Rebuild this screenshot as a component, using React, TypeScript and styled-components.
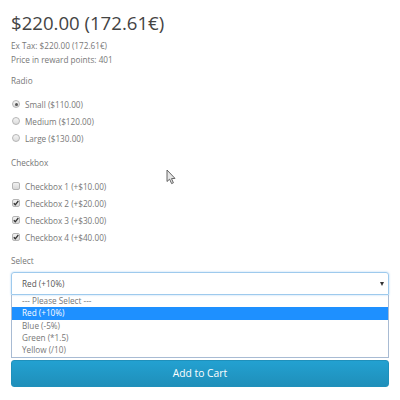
import React from 'react';
import styled, { createGlobalStyle } from 'styled-components';

const GlobalStyle = createGlobalStyle`
  html, body {
    margin: 0;
    padding: 0;
    background: #ffffff;
  }
  body {
    font-family: 'Open Sans', 'DejaVu Sans', sans-serif;
    color: #777777;
  }
`;

const Page = styled.div`
  position: relative;
  width: 400px;
  height: 400px;
  padding: 10px 11px 0;
  box-sizing: border-box;
  overflow: hidden;
`;

const Price = styled.h2`
  margin: 0;
  font-size: 18.6px;
  line-height: 26px;
  font-weight: 400;
  color: #444444;
`;

const InfoList = styled.ul`
  list-style: none;
  margin: 3px 0 0;
  padding: 0;
`;

const InfoItem = styled.li`
  font-size: 8.2px;
  line-height: 14px;
  color: #777777;
`;

const Group = styled.div<{ $gap?: number }>`
  margin-top: ${(p) => p.$gap ?? 9}px;
`;

const FieldLabel = styled.div`
  font-size: 8.2px;
  line-height: 14px;
  color: #777777;
`;

const OptionList = styled.div`
  margin-top: 7.5px;
  display: flex;
  flex-direction: column;
`;

const Option = styled.label`
  display: flex;
  align-items: center;
  gap: 5px;
  height: 17px;
  padding-left: 1px;
  font-size: 8.2px;
  color: #777777;
`;

const RadioMark = styled.span<{ $checked?: boolean }>`
  width: 8px;
  height: 8px;
  box-sizing: border-box;
  border-radius: 50%;
  border: 1px solid #b5b5b5;
  background: linear-gradient(#f4f4f4, #dcdcdc);
  display: flex;
  align-items: center;
  justify-content: center;

  &::after {
    content: '';
    display: ${(p) => (p.$checked ? 'block' : 'none')};
    width: 3px;
    height: 3px;
    border-radius: 50%;
    background: #555555;
  }
`;

const CheckMark = styled.span`
  width: 8px;
  height: 8px;
  box-sizing: border-box;
  border-radius: 2px;
  border: 1px solid #b5b5b5;
  background: linear-gradient(#f2f2f2, #d8d8d8);
  display: flex;
  align-items: center;
  justify-content: center;
`;

const SelectBox = styled.div`
  margin-top: 4px;
  height: 23px;
  box-sizing: border-box;
  border: 1px solid #9ecaed;
  border-radius: 3px 3px 0 0;
  box-shadow: 0 0 2px rgba(102, 175, 233, 0.6);
  display: flex;
  align-items: center;
  justify-content: space-between;
  padding: 0 4px 0 10px;
  font-size: 8.2px;
  color: #555555;
`;

const Arrow = styled.span`
  width: 0;
  height: 0;
  border-left: 2.5px solid transparent;
  border-right: 2.5px solid transparent;
  border-top: 4px solid #333333;
`;

const Dropdown = styled.ul`
  list-style: none;
  margin: 0;
  padding: 0;
  border: 1px solid #a8bbd3;
  border-top: none;
  height: 63px;
  box-sizing: border-box;
`;

const DropItem = styled.li<{ $active?: boolean }>`
  height: 12.3px;
  line-height: 12.3px;
  padding-left: 10px;
  font-size: 8.2px;
  color: ${(p) => (p.$active ? '#ffffff' : '#777777')};
  background: ${(p) => (p.$active ? '#1e90ff' : 'transparent')};
`;

const CartButton = styled.button`
  display: block;
  width: 100%;
  margin-top: 1.5px;
  height: 27px;
  border: 1px solid #1f90bb;
  border-radius: 3px;
  background: linear-gradient(#23a1d1, #1f8fba);
  color: #ffffff;
  font-family: 'Open Sans', 'DejaVu Sans', sans-serif;
  font-size: 10.3px;
  cursor: pointer;
`;

const Pointer = styled.svg`
  position: absolute;
  left: 166px;
  top: 169px;
`;

const radios = [
  { label: 'Small ($110.00)', checked: true },
  { label: 'Medium ($120.00)', checked: false },
  { label: 'Large ($130.00)', checked: false },
];

const checks = [
  { label: 'Checkbox 1 (+$10.00)', checked: false },
  { label: 'Checkbox 2 (+$20.00)', checked: true },
  { label: 'Checkbox 3 (+$30.00)', checked: true },
  { label: 'Checkbox 4 (+$40.00)', checked: true },
];

const choices = ['--- Please Select ---', 'Red (+10%)', 'Blue (-5%)', 'Green (*1.5)', 'Yellow (/10)'];

const Tick = () => (
  <svg width="6" height="6" viewBox="0 0 6 6">
    <path d="M0.8 3.2 L2.3 4.8 L5.3 1" fill="none" stroke="#333" strokeWidth="1.3" />
  </svg>
);

export default function App() {
  return (
    <Page>
      <GlobalStyle />
      <Price>$220.00 (172.61€)</Price>
      <InfoList>
        <InfoItem>Ex Tax: $220.00 (172.61€)</InfoItem>
        <InfoItem>Price in reward points: 401</InfoItem>
      </InfoList>

      <Group $gap={7}>
        <FieldLabel>Radio</FieldLabel>
        <OptionList>
          {radios.map((r) => (
            <Option key={r.label}>
              <RadioMark $checked={r.checked} />
              {r.label}
            </Option>
          ))}
        </OptionList>
      </Group>

      <Group $gap={9.5}>
        <FieldLabel>Checkbox</FieldLabel>
        <OptionList>
          {checks.map((c) => (
            <Option key={c.label}>
              <CheckMark>{c.checked && <Tick />}</CheckMark>
              {c.label}
            </Option>
          ))}
        </OptionList>
      </Group>

      <Group $gap={8.5}>
        <FieldLabel>Select</FieldLabel>
        <SelectBox>
          <span>Red (+10%)</span>
          <Arrow />
        </SelectBox>
        <Dropdown>
          {choices.map((c) => (
            <DropItem key={c} $active={c === 'Red (+10%)'}>
              {c}
            </DropItem>
          ))}
        </Dropdown>
      </Group>

      <CartButton>Add to Cart</CartButton>

      <Pointer width="11" height="16" viewBox="0 0 11 16">
        <path d="M1 1 L1 12.5 L3.6 10.2 L5.6 14.6 L7.4 13.8 L5.5 9.6 L9 9.4 Z" fill="#e6e6e6" stroke="#555" strokeWidth="0.9" strokeLinejoin="round" />
      </Pointer>
    </Page>
  );
}
